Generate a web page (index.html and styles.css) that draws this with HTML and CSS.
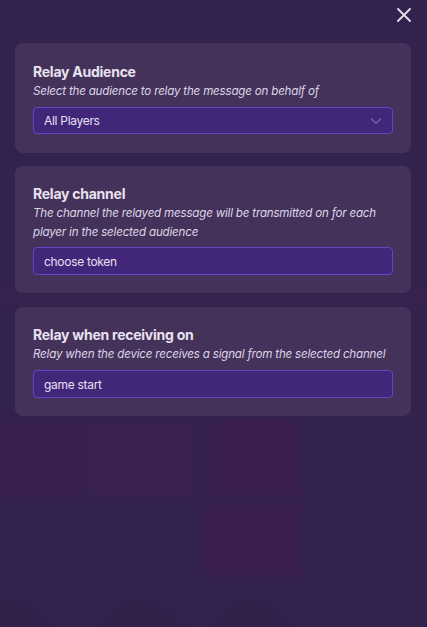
FILE: index.html
```html
<!DOCTYPE html>
<html>
<head>
<meta charset="utf-8">
<link rel="stylesheet" href="styles.css">
</head>
<body>
<div class="backdrop" aria-hidden="true">
  <div class="blob b1"></div>
  <div class="blob b2"></div>
  <div class="blob b3"></div>
  <div class="blob b4"></div>
  <div class="blob b5"></div>
  <div class="circle c1"></div>
  <div class="circle c2"></div>
  <div class="circle c3"></div>
</div>
<div class="modal">
  <div class="topbar">
    <button class="close" aria-label="Close">
      <svg width="14" height="14" viewBox="0 0 14 14"><path d="M1 1 L13 13 M13 1 L1 13" stroke="#e4dfec" stroke-width="1.8" stroke-linecap="round" fill="none"/></svg>
    </button>
  </div>
  <div class="cards">
    <section class="card">
      <h2 class="title">Relay Audience</h2>
      <p class="desc">Select the audience to relay the message on behalf of</p>
      <div class="field select">
        <span>All Players</span>
        <svg class="chev" width="12" height="8" viewBox="0 0 12 8"><path d="M1 1.5 L6 6.5 L11 1.5" stroke="#7f64b0" stroke-width="1.2" fill="none"/></svg>
      </div>
    </section>
    <section class="card">
      <h2 class="title">Relay channel</h2>
      <p class="desc">The channel the relayed message will be transmitted on for each player in the selected audience</p>
      <div class="field"><span>choose token</span></div>
    </section>
    <section class="card">
      <h2 class="title">Relay when receiving on</h2>
      <p class="desc">Relay when the device receives a signal from the selected channel</p>
      <div class="field"><span>game start</span></div>
    </section>
  </div>
</div>
</body>
</html>
```
FILE: styles.css
```css
html, body {
  margin: 0;
  padding: 0;
}
body {
  width: 427px;
  height: 627px;
  overflow: hidden;
  background: #34224e;
  font-family: Inter, "Noto Sans", "Liberation Sans", sans-serif;
  position: relative;
}
.backdrop {
  position: absolute;
  inset: 0;
  z-index: 0;
  overflow: hidden;
}
.blob {
  position: absolute;
  filter: blur(3px);
}
.b1 { left: 0; top: 420px; width: 78px; height: 75px; background: #3a2050; }
.b2 { left: 84px; top: 420px; width: 112px; height: 75px; background: #392151; }
.b3 { left: 210px; top: 420px; width: 90px; height: 75px; background: #3b1f4f; }
.b4 { left: 205px; top: 505px; width: 95px; height: 70px; background: #3a1f4f; }
.b5 { left: 0; top: 290px; width: 427px; height: 14px; background: #382350; }
.circle {
  position: absolute;
  top: 598px;
  width: 80px;
  height: 80px;
  border-radius: 50%;
  background: #30214a;
  filter: blur(2px);
}
.c1 { left: -30px; }
.c2 { left: 102px; }
.c3 { left: 212px; }

.modal {
  position: relative;
  z-index: 1;
  padding: 0 16px 0 15px;
}
.topbar {
  height: 43px;
  display: flex;
  justify-content: flex-end;
  align-items: flex-start;
}
.close {
  margin: 8px 0 0 0;
  padding: 0;
  border: 0;
  background: none;
  width: 14px;
  height: 14px;
  display: block;
}
.close svg { display: block; }
.cards {
  display: flex;
  flex-direction: column;
  gap: 13px;
}
.card {
  background: #45325b;
  border-radius: 8px;
  padding: 19px 18px;
}
.card:nth-child(2) { padding: 18px; }
.card:nth-child(3) { margin-top: 1px; padding: 18px; }
.card:nth-child(3) .field { margin-top: 6px; }
.title {
  margin: 0;
  font-size: 14px;
  line-height: 20px;
  font-weight: 700;
  color: #e8e2ef;
  letter-spacing: -0.25px;
}
.desc {
  margin: 0;
  font-size: 11.6px;
  line-height: 19px;
  font-style: italic;
  color: #ddd5e5;
  letter-spacing: -0.2px;
}
.field {
  margin-top: 5px;
  height: 28px;
  box-sizing: border-box;
  border: 1px solid #6a41c8;
  border-radius: 4px;
  background: #42267a;
  display: flex;
  align-items: center;
  justify-content: space-between;
  padding: 0 10px;
  font-size: 12px;
  letter-spacing: -0.3px;
  color: #e6e0ee;
}
.select { margin-top: 6px; height: 27px; }
.chev { display: block; }
```
